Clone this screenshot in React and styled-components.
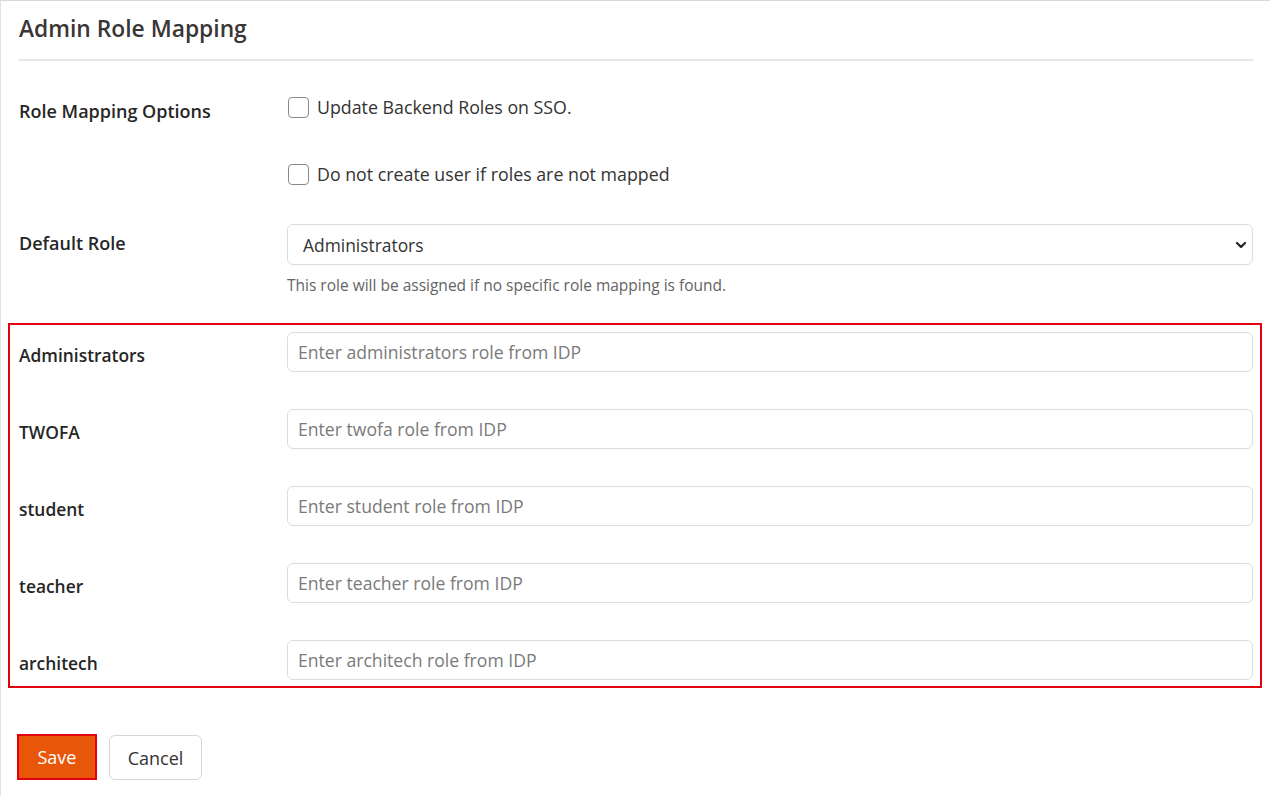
import React from "react";
import styled, { createGlobalStyle } from "styled-components";
import { ChevronDown } from "lucide-react";

const roles = [
  { label: "Administrators", key: "administrators" },
  { label: "TWOFA", key: "twofa" },
  { label: "student", key: "student" },
  { label: "teacher", key: "teacher" },
  { label: "architech", key: "architech" },
];

function App() {
  return (
    <>
      <GlobalStyle />
      <Card>
        <Header>
          <Title>Admin Role Mapping</Title>
        </Header>

        <OptionsRow>
          <Label $top={4}>Role Mapping Options</Label>
          <CheckList>
            <CheckItem>
              <Box type="checkbox" />
              <span>Update Backend Roles on SSO.</span>
            </CheckItem>
            <CheckItem>
              <Box type="checkbox" />
              <span>Do not create user if roles are not mapped</span>
            </CheckItem>
          </CheckList>
        </OptionsRow>

        <DefaultRow>
          <Label $top={7}>Default Role</Label>
          <div>
            <SelectWrap>
              <Select defaultValue="Administrators">
                {roles.map((r) => (
                  <option key={r.key}>{r.label}</option>
                ))}
              </Select>
              <Chevron>
                <ChevronDown size={16} strokeWidth={3.2} />
              </Chevron>
            </SelectWrap>
            <Hint>This role will be assigned if no specific role mapping is found.</Hint>
          </div>
        </DefaultRow>

        <Highlight>
          {roles.map((r) => (
            <RoleRow key={r.key}>
              <Label $top={5} $size={17.4}>
                {r.label}
              </Label>
              <Input placeholder={`Enter ${r.key} role from IDP`} />
            </RoleRow>
          ))}
        </Highlight>

        <Actions>
          <SaveButton>Save</SaveButton>
          <CancelButton>Cancel</CancelButton>
        </Actions>
      </Card>
    </>
  );
}

const GlobalStyle = createGlobalStyle`
  body {
    margin: 0;
    background: #fff;
    font-family: "Open Sans", "Noto Sans", sans-serif;
    color: #333;
  }
`;

const Card = styled.div`
  box-sizing: border-box;
  min-height: 796px;
  border-top: 1px solid #d9d9d9;
  border-left: 1px solid #e2e2e2;
  padding: 0 17px 0 18px;
`;

const Header = styled.div`
  height: 58px;
  border-bottom: 2px solid #e6e6e6;
  display: flex;
  align-items: center;
`;

const Title = styled.h1`
  margin: 0 0 3px;
  font-size: 22.8px;
  font-weight: 600;
  color: #3b3636;
`;

const Row = styled.div`
  display: grid;
  grid-template-columns: 268px 1fr;
`;

const OptionsRow = styled(Row)`
  margin-top: 34px;
`;

const DefaultRow = styled(Row)`
  margin-top: 38px;
`;

const Label = styled.div`
  padding-top: ${(p) => p.$top}px;
  font-size: ${(p) => p.$size || 18}px;
  font-weight: 600;
  color: #262626;
`;

const CheckList = styled.div`
  display: flex;
  flex-direction: column;
  gap: 43px;
`;

const CheckItem = styled.label`
  display: flex;
  align-items: center;
  gap: 8px;
  font-size: 17.8px;
  color: #333;
  height: 24px;
`;

const Box = styled.input`
  appearance: none;
  margin: 0 0 0 1px;
  width: 21px;
  height: 21px;
  border: 1.5px solid #8a8a8a;
  border-radius: 4px;
  background: #fff;
`;

const SelectWrap = styled.div`
  position: relative;
`;

const Select = styled.select`
  appearance: none;
  box-sizing: border-box;
  width: 100%;
  height: 41px;
  padding: 0 40px 0 15px;
  border: 1px solid #dcdcdc;
  border-radius: 6px;
  background: #fff;
  font-family: "Open Sans", sans-serif;
  font-size: 17.4px;
  color: #333;
`;

const Chevron = styled.span`
  position: absolute;
  right: 4px;
  top: 12px;
  color: #222;
  pointer-events: none;
`;

const Hint = styled.div`
  margin-top: 9px;
  font-size: 15.5px;
  color: #646464;
`;

const Highlight = styled.div`
  margin: 27px -9px 0 -11px;
  padding: 7px 7px 6px 9px;
  border: 2px solid #e3000f;
  display: flex;
  flex-direction: column;
  gap: 37px;
`;

const RoleRow = styled(Row)`
  align-items: center;
`;

const Input = styled.input`
  box-sizing: border-box;
  width: 100%;
  height: 40px;
  padding: 0 10px;
  border: 1px solid #dcdcdc;
  border-radius: 6px;
  font-family: "Open Sans", sans-serif;
  font-size: 17.6px;
  color: #333;
  &::placeholder {
    color: #7a7a7a;
  }
`;

const Actions = styled.div`
  display: flex;
  gap: 12px;
  margin-top: 46px;
  margin-left: -2px;
  align-items: flex-start;
`;

const SaveButton = styled.button`
  width: 80px;
  height: 46px;
  background: #e8560a;
  border: 2px solid #e3000f;
  color: #fff;
  font-family: "Open Sans", sans-serif;
  font-size: 18px;
`;

const CancelButton = styled.button`
  margin-top: 1px;
  width: 93px;
  height: 45px;
  background: #fff;
  border: 1px solid #d6d6d6;
  border-radius: 6px;
  color: #333;
  font-family: "Open Sans", sans-serif;
  font-size: 18px;
`;

export default App;
